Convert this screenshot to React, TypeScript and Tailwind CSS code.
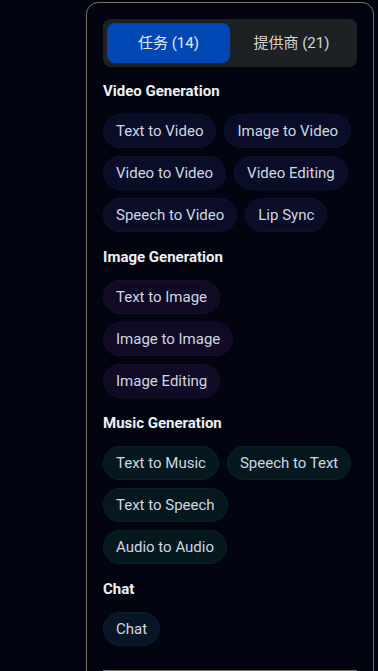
import { useState } from "react";

const groups = [
  {
    title: "Video Generation",
    chip: "bg-[#090d28] border-[#0e1332]",
    items: ["Text to Video", "Image to Video", "Video to Video", "Video Editing", "Speech to Video", "Lip Sync"],
  },
  {
    title: "Image Generation",
    chip: "bg-[#100a24] border-[#160f2e]",
    items: ["Text to Image", "Image to Image", "Image Editing"],
  },
  {
    title: "Music Generation",
    chip: "bg-[#05181d] border-[#0a2226]",
    items: ["Text to Music", "Speech to Text", "Text to Speech", "Audio to Audio"],
  },
  {
    title: "Chat",
    chip: "bg-[#061626] border-[#0b1f2f]",
    items: ["Chat"],
  },
];

const App = () => {
  const [tab, setTab] = useState(0);

  return (
    <div
      className="h-[671px] w-[378px] overflow-hidden bg-[#02050f] pt-[2px] pl-[86px]"
      style={{ fontFamily: 'Roboto, "Noto Sans CJK SC", sans-serif' }}
    >
      <div className="w-[288px] h-[700px] rounded-t-[12px] border border-[#7a7264] px-4 pt-4">
        {/* tabs */}
        <div className="grid grid-cols-2 gap-0 rounded-lg bg-[#1e2124] p-1 mb-[14px]">
          {["任务 (14)", "提供商 (21)"].map((label, i) => (
            <button
              key={i}
              onClick={() => setTab(i)}
              className={
                "h-10 rounded-lg text-[15px] " +
                (tab === i ? "bg-[#0047b3] text-[#e2e8f4]" : "text-[#d4d4d4]")
              }
            >
              {label}
            </button>
          ))}
        </div>

        <div className="flex flex-col gap-[15px]">
          {groups.map((group) => (
            <div key={group.title}>
              <h3 className="text-[15px] leading-5 font-bold text-[#eef0f4] mb-[13px]">{group.title}</h3>
              <div className="flex flex-wrap gap-2">
                {group.items.map((item) => (
                  <span
                    key={item}
                    className={"h-[34px] flex items-center rounded-full border px-3 text-[15px] text-[#cfd6e2] " + group.chip}
                  >
                    {item}
                  </span>
                ))}
              </div>
            </div>
          ))}
        </div>

        <div className="mt-[24px] border-t border-[#7a7264]" />
      </div>
    </div>
  );
};

export default App;
